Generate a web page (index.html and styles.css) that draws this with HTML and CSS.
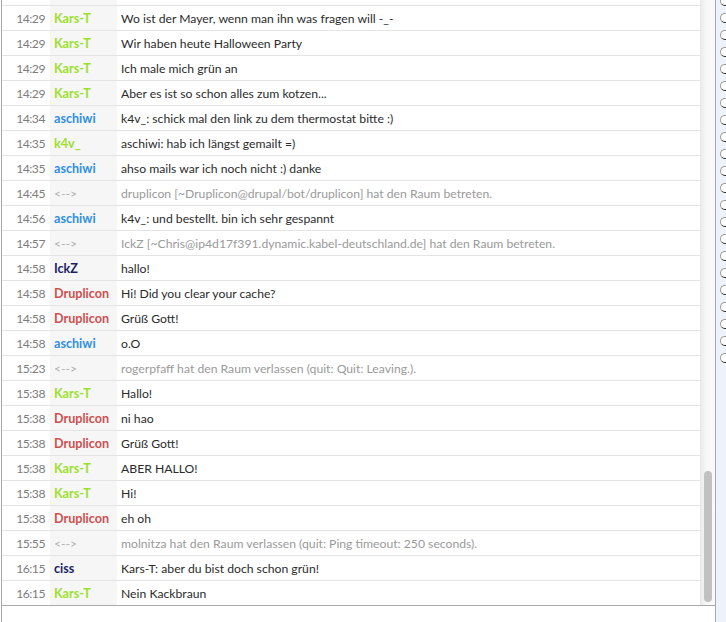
FILE: index.html
```html
<!DOCTYPE html>
<html lang="de">
<head>
<meta charset="utf-8">
<title>Chat</title>
<link rel="stylesheet" href="styles.css">
</head>
<body>
<div class="app">
  <section class="pane">
    <div class="view">
      <div class="log">
        <div class="row"><span class="time"></span><span class="nick"></span><span class="msg"></span></div>
        <div class="row"><span class="time">14:29</span><span class="nick green">Kars-T</span><span class="msg">Wo ist der Mayer, wenn man ihn was fragen will -_-</span></div>
        <div class="row"><span class="time">14:29</span><span class="nick green">Kars-T</span><span class="msg">Wir haben heute Halloween Party</span></div>
        <div class="row"><span class="time">14:29</span><span class="nick green">Kars-T</span><span class="msg">Ich male mich grün an</span></div>
        <div class="row"><span class="time">14:29</span><span class="nick green">Kars-T</span><span class="msg">Aber es ist so schon alles zum kotzen...</span></div>
        <div class="row"><span class="time">14:34</span><span class="nick blue">aschiwi</span><span class="msg">k4v_: schick mal den link zu dem thermostat bitte :)</span></div>
        <div class="row"><span class="time">14:35</span><span class="nick green">k4v_</span><span class="msg">aschiwi: hab ich längst gemailt =)</span></div>
        <div class="row"><span class="time">14:35</span><span class="nick blue">aschiwi</span><span class="msg">ahso mails war ich noch nicht :) danke</span></div>
        <div class="row sys"><span class="time">14:45</span><span class="nick">&lt;--&gt;</span><span class="msg">druplicon [~Druplicon@drupal/bot/druplicon] hat den Raum betreten.</span></div>
        <div class="row"><span class="time">14:56</span><span class="nick blue">aschiwi</span><span class="msg">k4v_: und bestellt. bin ich sehr gespannt</span></div>
        <div class="row sys"><span class="time">14:57</span><span class="nick">&lt;--&gt;</span><span class="msg">IckZ [~Chris@ip4d17f391.dynamic.kabel-deutschland.de] hat den Raum betreten.</span></div>
        <div class="row"><span class="time">14:58</span><span class="nick navy">IckZ</span><span class="msg">hallo!</span></div>
        <div class="row"><span class="time">14:58</span><span class="nick red">Druplicon</span><span class="msg">Hi! Did you clear your cache?</span></div>
        <div class="row"><span class="time">14:58</span><span class="nick red">Druplicon</span><span class="msg">Grüß Gott!</span></div>
        <div class="row"><span class="time">14:58</span><span class="nick blue">aschiwi</span><span class="msg">o.O</span></div>
        <div class="row sys"><span class="time">15:23</span><span class="nick">&lt;--&gt;</span><span class="msg">rogerpfaff hat den Raum verlassen (quit: Quit: Leaving.).</span></div>
        <div class="row"><span class="time">15:38</span><span class="nick green">Kars-T</span><span class="msg">Hallo!</span></div>
        <div class="row"><span class="time">15:38</span><span class="nick red">Druplicon</span><span class="msg">ni hao</span></div>
        <div class="row"><span class="time">15:38</span><span class="nick red">Druplicon</span><span class="msg">Grüß Gott!</span></div>
        <div class="row"><span class="time">15:38</span><span class="nick green">Kars-T</span><span class="msg">ABER HALLO!</span></div>
        <div class="row"><span class="time">15:38</span><span class="nick green">Kars-T</span><span class="msg">Hi!</span></div>
        <div class="row"><span class="time">15:38</span><span class="nick red">Druplicon</span><span class="msg">eh oh</span></div>
        <div class="row sys"><span class="time">15:55</span><span class="nick">&lt;--&gt;</span><span class="msg">molnitza hat den Raum verlassen (quit: Ping timeout: 250 seconds).</span></div>
        <div class="row"><span class="time">16:15</span><span class="nick navy">ciss</span><span class="msg">Kars-T: aber du bist doch schon grün!</span></div>
        <div class="row"><span class="time">16:15</span><span class="nick green">Kars-T</span><span class="msg">Nein Kackbraun</span></div>
      </div>
      <div class="track"><div class="thumb"></div></div>
    </div>
    <div class="footer"></div>
  </section>
  <aside class="side">
    <span class="dot"></span><span class="dot"></span><span class="dot"></span><span class="dot"></span>
    <span class="dot"></span><span class="dot"></span><span class="dot"></span><span class="dot"></span>
    <span class="dot"></span><span class="dot"></span><span class="dot"></span><span class="dot"></span>
    <span class="dot"></span><span class="dot"></span><span class="dot"></span><span class="dot"></span>
    <span class="dot"></span><span class="dot"></span><span class="dot"></span><span class="dot"></span>
    <span class="dot"></span><span class="dot"></span>
  </aside>
</div>
</body>
</html>
```

FILE: styles.css
```css
html, body {
  margin: 0;
  padding: 0;
  height: 100%;
  overflow: hidden;
  background: #ffffff;
}

body {
  font-family: Lato, "Open Sans", sans-serif;
  font-size: 12.2px;
  color: #2b2b2b;
}

.app {
  display: flex;
  height: 622px;
}

/* chat pane: log + scrollbar, then an empty input strip */
.pane {
  width: 715px;
  margin-left: 1px;
  border-left: 1px solid #a8a8a8;
  display: flex;
  flex-direction: column;
  box-sizing: border-box;
}

.view {
  display: flex;
  height: 605px;
  border-bottom: 1px solid #a9a9a9;
  box-sizing: content-box;
}

/* newest lines stay pinned to the bottom, older ones run off the top */
.log {
  flex: 1;
  display: flex;
  flex-direction: column;
  justify-content: flex-end;
  overflow: hidden;
}

.row {
  flex: none;
  height: 25px;
  box-sizing: border-box;
  border-top: 1px solid #e4e4e4;
  display: grid;
  grid-template-columns: 48px 67px 1fr;
  align-items: stretch;
  white-space: nowrap;
}

.row > span {
  display: flex;
  align-items: center;
}

.time {
  justify-content: flex-end;
  padding-right: 5px;
  color: #7d7d7d;
  letter-spacing: -0.5px;
}

.nick {
  background: #f6f6f6;
  padding-left: 4px;
  font-weight: 700;
  font-size: 12.6px;
}

.msg {
  padding-left: 4px;
  overflow: hidden;
}

.green { color: #9ce02c; }
.blue  { color: #2f8fe8; }
.red   { color: #cf4f4f; }
.navy  { color: #1c1f66; }

.sys .nick {
  font-weight: 400;
  font-size: 12.2px;
  color: #b0b0b0;
}

.sys .msg {
  color: #9a9a9a;
}

/* scrollbar */
.track {
  width: 15px;
  flex: none;
  background: linear-gradient(to right, #ececec, #f7f7f7 40%, #fafafa);
  border-left: 1px solid #e8e8e8;
  box-sizing: border-box;
  display: flex;
  flex-direction: column;
  align-items: center;
  padding-bottom: 3px;
}

.thumb {
  margin-top: auto;
  width: 8px;
  height: 131px;
  border-radius: 4px;
  background: #c1c1c1;
}

.footer {
  flex: 1;
  background: #ffffff;
}

/* side strip of status toggles */
.side {
  flex: none;
  width: 10px;
  border-left: 1px solid #a9a9a9;
  background: #edf2fb;
  overflow: hidden;
  display: flex;
  flex-direction: column;
  gap: 7px;
  margin-top: -4px;
}

.dot {
  flex: none;
  width: 10px;
  height: 10px;
  margin-left: 4px;
  box-sizing: border-box;
  border-radius: 50%;
  background: #ffffff;
  border: 1px solid #9a9a9a;
  border-bottom-color: #2a2a2a;
  border-right-color: #4a4a4a;
}
```
